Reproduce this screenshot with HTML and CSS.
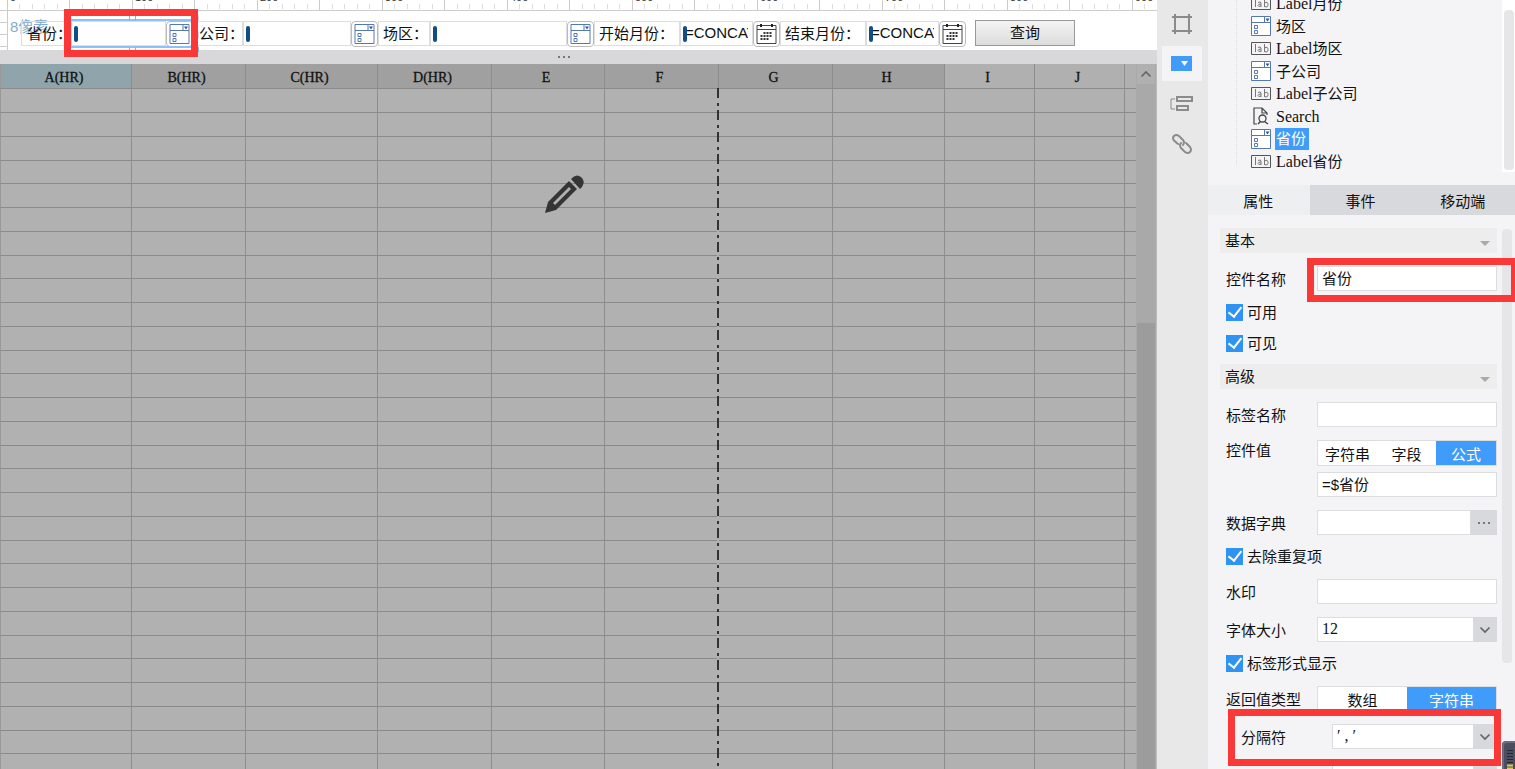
FILE: index.html
```html
<!DOCTYPE html>
<html lang="zh-CN">
<head>
<meta charset="utf-8">
<title>控件设置</title>
<link rel="stylesheet" href="styles.css">
</head>
<body>
<svg class="defs" aria-hidden="true">
  <symbol id="combo" viewBox="0 0 20 20"><path d="M.5.5h19v19H.5zM.5 6.500h19M13.500.5v6" fill="#fff" stroke="#5478b0"/><path d="M14.500 2.500h4l-2 3z" fill="#34558d"/><path d="M3.500 9.500h3v3h-3zM3.500 14.500h3v3h-3z" fill="none" stroke="#5478b0"/></symbol>
  <symbol id="cal" viewBox="0 0 20 20"><path d="M.5 1.500h19v18H.5zM.5 5.500h19" fill="#fff" stroke="#444"/><path d="M4.500 0v3M15.500 0v3" stroke="#222" stroke-width="2"/><path d="M7 8h2v2H7zM10 8h2v2h-2zM13 8h2v2h-2zM4 11h2v2H4zM7 11h2v2H7zM10 11h2v2h-2zM13 11h2v2h-2zM4 14h2v2H4zM7 14h2v2H7zM10 14h2v2h-2z" fill="#333"/></symbol>
  <symbol id="lab" viewBox="0 0 20 13"><path d="M.5.5h19v12H.5z" fill="#f4f4f6" stroke="#555"/><path d="M4.500 2v8M7 5.500q3-1.500 3 .8V10M10 7q-3 0-3 1.500t3 .7M13.500 2v8M13.500 6q3.500-2 3.500 1.500t-3.500 2" fill="none" stroke="#777"/></symbol>
  <symbol id="find" viewBox="0 0 16 18"><path d="M4 17H1V1h8l5 5v2M9 1v5h5" fill="none" stroke="#444" stroke-width="1.200"/><circle cx="9.500" cy="11.500" r="3.500" fill="none" stroke="#444" stroke-width="1.300"/><path d="M7.500 14.500L5 17M11.500 14.500L15 17" stroke="#444" stroke-width="1.500"/></symbol>
  <symbol id="down" viewBox="0 0 12 8"><path d="M1.500 1.500L6 6l4.500-4.500" fill="none" stroke="#666" stroke-width="1.700"/></symbol>
</svg>

<main class="designer">
  <div class="ruler">
    <svg class="ticks" aria-hidden="true">
      <defs><pattern id="tk" width="125" height="10" patternUnits="userSpaceOnUse"><path d="M.5 0v10M62.500 0v10" stroke="#ccc"/><path d="M12.500 4v5M25.500 4v5M37.500 4v5M50.500 4v5M75.500 4v5M87.500 4v5M100.500 4v5M112.500 4v5" stroke="#ddd"/></pattern></defs>
      <rect width="100%" height="10" fill="url(#tk)"/>
    </svg>
    <div class="marks"><span>0</span><span>100</span><span>200</span><span>300</span><span>400</span><span>500</span><span>600</span><span>700</span><span>800</span><span>900</span></div>
  </div>

  <div class="params">
    <div class="vruler"></div>
    <span class="offset">8像素</span>
    <label class="plabel first" for="p1">省份：</label>
    <div class="field selected">
      <input id="p1" class="pinput w-s"><button class="pbtn" aria-label="选择省份"><svg><use href="#combo"/></svg></button>
      <svg class="handles" width="130" height="38" aria-hidden="true"><path d="M58.500 6V.5h6V6M122 .5h5V6h-5M122 16.500h5v7h-5M58.500 32v5h6v-5M127.500 37v-5H122" fill="none" stroke="#8db4d6"/></svg>
      <i class="mark mark-top"></i>
    </div>
    <label class="plabel sub" for="p2">公司：</label>
    <div class="field"><input id="p2" class="pinput w-m"><button class="pbtn" aria-label="选择子公司"><svg><use href="#combo"/></svg></button></div>
    <label class="plabel area" for="p3">场区：</label>
    <div class="field"><input id="p3" class="pinput w-l"><button class="pbtn" aria-label="选择场区"><svg><use href="#combo"/></svg></button></div>
    <label class="plabel month" for="p4">开始月份：</label>
    <div class="field"><input id="p4" class="pinput w-d" value="=CONCATENATE"><button class="pbtn" aria-label="开始日期"><svg><use href="#cal"/></svg></button></div>
    <label class="plabel month" for="p5">结束月份：</label>
    <div class="field"><input id="p5" class="pinput w-d" value="=CONCATENATE"><button class="pbtn" aria-label="结束日期"><svg><use href="#cal"/></svg></button></div>
    <button class="query">查询</button>
  </div>

  <div class="splitter"><i></i><i></i><i></i></div>

  <div class="sheet">
    <div class="cells">
      <table class="grid">
        <colgroup><col class="c132"><col class="c114"><col class="c132"><col class="c114"><col class="c113"><col class="c114"><col class="c114"><col class="c112"><col class="c90"><col class="c90"><col></colgroup>
        <thead><tr><th class="on">A(HR)</th><th>B(HR)</th><th>C(HR)</th><th>D(HR)</th><th>E</th><th>F</th><th>G</th><th>H</th><th class="off">I</th><th class="off">J</th><th class="off"></th></tr></thead>
        <tbody id="rows"></tbody>
      </table>
      <div class="pagebreak"></div>
      <svg class="pencil" viewBox="0 0 40 40" aria-hidden="true"><path fill="#353535" fill-rule="evenodd" d="M1 39L4 28 25 7l8 8-21 21zM9 29l2 2 16-16-2-2z"/><path fill="#353535" d="M27 5q5-6 10-2t1 10l-2 2z"/></svg>
    </div>
    <div class="vscroll"><div class="up"><svg width="12" height="8"><use href="#down"/></svg></div><div class="thumb"></div></div>
  </div>
</main>

<nav class="rail">
  <button aria-label="单元格"><svg width="22" height="22" fill="none" stroke="#8b8b8b" stroke-width="2"><path d="M4 1v20M18 1v20M1 4h20M1 18h20"/></svg></button>
  <button class="active" aria-label="控件"><svg width="22" height="16"><path fill="#409cfb" d="M0 0h21v15H0z"/><path fill="#fff" d="M10 5h7l-3.500 5z"/></svg></button>
  <button aria-label="条件"><svg width="24" height="18" fill="none" stroke="#8b8b8b" stroke-width="2"><path d="M7 2h15v4H7zM7 11h11v4H7z"/><path d="M5 4H1v10h4" stroke-width="1"/></svg></button>
  <button aria-label="超链接"><svg width="22" height="22" viewBox="0 0 22 22" fill="none" stroke="#8b8b8b" stroke-width="2" stroke-linecap="round"><path d="M7 11L3 7.500Q1 5 3 3t5 0l4 4q2 2 0 5M15 10l4 4q2 3 0 5t-5 0l-4-4q-2-3 0-5"/></svg></button>
</nav>

<aside class="panel">
  <div class="tree">
    <ul>
      <li><svg class="tl"><use href="#lab"/></svg><span><b>Label</b>月份</span></li>
      <li><svg class="tc"><use href="#combo"/></svg><span>场区</span></li>
      <li><svg class="tl"><use href="#lab"/></svg><span><b>Label</b>场区</span></li>
      <li><svg class="tc"><use href="#combo"/></svg><span>子公司</span></li>
      <li><svg class="tl"><use href="#lab"/></svg><span><b>Label</b>子公司</span></li>
      <li><svg class="tf"><use href="#find"/></svg><span><b>Search</b></span></li>
      <li><svg class="tc"><use href="#combo"/></svg><span class="sel">省份</span></li>
      <li><svg class="tl"><use href="#lab"/></svg><span><b>Label</b>省份</span></li>
    </ul>
    <div class="tscroll"><i></i></div>
  </div>
  <div class="tabs" role="tablist"><button role="tab" aria-selected="true" class="cur">属性</button><button role="tab">事件</button><button role="tab">移动端</button></div>
  <div class="body">
    <form class="props">
      <h2>基本</h2>
      <div class="row"><label for="f1">控件名称</label><div class="ctl"><input id="f1" class="box" value="省份"><i class="mark mark-name"></i></div></div>
      <label class="check"><input type="checkbox" checked><span>可用</span></label>
      <label class="check"><input type="checkbox" checked><span>可见</span></label>
      <h2>高级</h2>
      <div class="row"><label for="f2">标签名称</label><input id="f2" class="box"></div>
      <div class="row high"><label for="f3">控件值</label><div class="seg three"><button type="button">字符串</button><button type="button">字段</button><button type="button" class="pick">公式</button></div></div>
      <div class="row tight"><span></span><input id="f3" class="box" value="=$省份"></div>
      <div class="row"><label for="f4">数据字典</label><div class="combo"><input id="f4" class="box"><button type="button" class="dots" aria-label="更多"><i></i><i></i><i></i></button></div></div>
      <label class="check"><input type="checkbox" checked><span>去除重复项</span></label>
      <div class="row"><label for="f5">水印</label><input id="f5" class="box"></div>
      <div class="row"><label for="f6">字体大小</label><div class="combo"><select id="f6" class="box"><option>12</option></select><span class="arrow"><svg width="12" height="8"><use href="#down"/></svg></span></div></div>
      <label class="check"><input type="checkbox" checked><span>标签形式显示</span></label>
      <div class="row"><span class="name">返回值类型</span><div class="seg two"><button type="button">数组</button><button type="button" class="pick">字符串</button></div></div>
      <div class="row inner"><label for="f7">分隔符</label><div class="combo"><select id="f7" class="box"><option>′ , ′</option></select><span class="arrow"><svg width="12" height="8"><use href="#down"/></svg></span></div><i class="mark mark-sep"></i></div>
      <div class="row inner"><span></span><div class="combo"><input class="box" aria-label="起始符"><span class="arrow"></span></div></div>
    </form>
    <div class="pscroll"></div>
  </div>
  <svg class="widget" width="14" height="28" aria-hidden="true"><path d="M0 28V4q0-4 4-4h10v28z" fill="#4b4e5e"/><path d="M1 28V5q0-4 4-4h9" fill="none" stroke="#6a6d7c" stroke-width="2"/><path d="M5 9.500h6M5 12.500h6M5 15.500h6M5 18.500h6M5 21.500h6" stroke="#252831"/><path d="M5 24.500h6M5 27.500h6" stroke="#e8c94b" stroke-width="2"/></svg>
</aside>
<script src="grid.js"></script>
</body>
</html>
```
FILE: styles.css
```css
* { box-sizing: border-box; }
body { margin: 0; height: 100vh; display: flex; overflow: hidden; font: 15px/20px "Liberation Sans", "Noto Sans CJK SC", sans-serif; color: #111; background: #f4f4f7; }
button, input, select { font: inherit; color: inherit; margin: 0; padding: 0; border: 0; border-radius: 0; }
button { background: none; }
.defs { position: absolute; width: 0; height: 0; }

.designer { flex: 1; min-width: 0; display: flex; flex-direction: column; overflow: hidden; background: #fff; }
.ruler { height: 11px; flex: none; position: relative; overflow: hidden; padding-left: 7px; border-bottom: 1px solid #ccc; }
.ticks { display: block; width: 100%; height: 10px; }
.marks { position: absolute; top: -8px; left: 10px; display: flex; font-size: 11px; line-height: 10px; color: #333; }
.marks span { flex: none; width: 125px; }

.params { height: 39px; flex: none; display: flex; align-items: center; position: relative; padding-top: 5px; }
.vruler { width: 8px; height: 39px; margin: -5px 13px 0 0; flex: none; border-right: 1px solid #ccc; background: repeating-linear-gradient(#fff 0 11px, #ccc 11px 12px); }
.offset { position: absolute; left: 10px; top: 6px; font-size: 15px; color: #82acd0; }
.plabel { position: relative; flex: none; height: 25px; line-height: 23px; border: 1px solid #ddd; padding-left: 4px; overflow: hidden; white-space: nowrap; }
.first { width: 50px; padding-left: 5px; }
.sub { width: 50px; padding-left: 5px; }
.area { width: 52px; }
.month { width: 86px; }
.field { position: relative; flex: none; display: flex; height: 25px; }
.field::before { content: ""; position: absolute; left: 3px; top: 5px; width: 4px; height: 16px; border-radius: 2px; background: #124e83; }
.pinput { height: 25px; border: 1px solid #ddd; padding: 0 4px 2px 4px; background: #fff; }
.w-s { width: 95px; }
.w-m { width: 108px; }
.w-l { width: 137px; }
.w-d { width: 73px; }
.pbtn { width: 27px; height: 26px; padding: 2px; border: 1px solid #bbb; border-radius: 4px; background: #fff; }
.pbtn svg { display: block; width: 21px; height: 20px; }
.selected { outline: 2px solid #8fc0f8; }
.handles { position: absolute; left: 0; top: -6px; }
.mark { position: absolute; border: 7px solid #fb3838; pointer-events: none; z-index: 2; }
.mark-top { inset: -12px -5px -11px -7px; }
.query { width: 100px; height: 26px; margin-left: 9px; border: 1px solid #999; background: linear-gradient(#f4f4f4, #dcdcdc); }

.splitter { height: 14px; flex: none; display: flex; justify-content: center; align-items: center; gap: 3px; padding-right: 30px; background: #d8d8db; }
.splitter i, .dots i { width: 2px; height: 2px; background: #777; }

.sheet { flex: 1; min-height: 0; display: flex; background: #b1b1b1; }
.cells { flex: 1; min-width: 0; position: relative; overflow: hidden; }
.grid { width: 100%; table-layout: fixed; border-collapse: separate; border-spacing: 0; }
.grid th, .grid td { padding: 0; border-right: 1px solid #8d8d8d; border-bottom: 1px solid #8a8a8a; }
.grid th:last-child, .grid td:last-child { border-right: 0; }
.grid th:first-child, .grid td:first-child { border-left: 1px solid #999; }
.grid th { height: 25px; padding: 3px 4px 0 0; background: #a0a0a0; font: 14px/18px "Liberation Serif", serif; -webkit-text-stroke: 0.3px #111; }
.grid .on { background: #8fa5ab; }
.grid .off { background: #b0b0b0; }
.grid td { height: 24px; }
.grid tr:nth-child(4n) td { height: 23px; }
.c132 { width: 132px; }
.c114 { width: 114px; }
.c113 { width: 113px; }
.c112 { width: 112px; }
.c90 { width: 90px; }
.pagebreak { position: absolute; top: 24px; bottom: 0; left: 717px; width: 2px; background: repeating-linear-gradient(#333 0 10px, #b1b1b1 10px 15px, #333 15px 18px, #b1b1b1 18px 22px); }
.pencil { position: absolute; left: 544px; top: 110px; width: 40px; height: 40px; }
.vscroll { width: 21px; display: flex; flex-direction: column; padding: 0 1px; background: #a9a9a9; border-right: 1px solid #bbb; }
.up { height: 20px; display: grid; place-items: center; background: #b0b0b0; }
.up svg { transform: rotate(180deg); }
.thumb { flex: 1; margin-top: 239px; background: #9c9c9c; }

.rail { width: 51px; flex: none; display: flex; flex-direction: column; gap: 5px; padding: 6px 6px 0 5px; background: #e8e8e8; }
.rail button { height: 35px; display: grid; place-items: center; }
.rail .active { background: #f4f4f7; }

.panel { width: 307px; flex: none; position: relative; overflow: hidden; display: flex; flex-direction: column; }
.tree { height: 185px; flex: none; display: flex; justify-content: space-between; overflow: hidden; }
.tree ul { list-style: none; margin: -7px 0 0 28px; padding: 0; height: 172px; border-left: 1px dotted #ddd; }
.tree li { display: flex; align-items: center; height: 22px; padding-left: 14px; }
.tree li:nth-child(even) { height: 23px; }
.tree li svg { flex: none; margin-top: -1px; }
.tree li span { padding: 1px 3px 1px 1px; line-height: 20px; }
.tree b { font: 16px/20px "Liberation Serif", serif; }
.tree .sel { background: #409cfb; color: #fff; }
.tl { width: 20px; height: 13px; margin-right: 4px; }
.tc { width: 20px; height: 20px; margin-right: 4px; }
.tf { width: 16px; height: 18px; margin: 0 6px 0 2px; }
.tscroll { width: 13px; height: 172px; padding: 10px 1px 2px 2px; background: #fff; }
.tscroll i { display: block; height: 160px; border-radius: 4px; background: #e6e6e8; }

.tabs { height: 30px; flex: none; display: flex; background: #d8d9dc; }
.tabs button { flex: 1; padding: 3px 2px 0 0; }
.tabs .cur { background: #eeeff1; }

.body { display: flex; padding-top: 13px; }
.props { flex: 1; padding-left: 12px; }
.props h2 { margin: 13px 0 0; height: 25px; padding: 0 7px 0 5px; display: flex; align-items: center; justify-content: space-between; font-size: 15px; font-weight: 400; line-height: 22px; background: #ededed; }
.props h2:first-child { margin-top: 0; }
.props h2::after { content: ""; margin-top: 5px; border: 5px solid transparent; border-top-color: #aaa; border-bottom: 0; }
.row { position: relative; display: grid; grid-template-columns: 91px 1fr; align-items: center; height: 25px; margin: 13px 0 0 6px; }
.row > label, .name, .check span { padding-top: 2px; }
.row.high > label { padding: 0 0 4px; }
.inner { margin-left: 21px; }
.tight { margin-top: 7px; }
.check + .row { margin-top: 15px; }
.check { display: flex; align-items: center; gap: 4px; height: 16px; margin: 13px 0 0 6px; }
.check + .check { margin-top: 15px; }
.check input { appearance: none; width: 17px; height: 17px; background: #2f93f4; display: grid; place-items: center; }
.check input:checked::before { content: ""; width: 6px; height: 11px; border: solid #fff; border-width: 0 2px 2px 0; transform: rotate(38deg); margin-top: -3px; }
.ctl { position: relative; display: flex; }
.box { appearance: none; width: 100%; min-width: 0; height: 25px; border: 1px solid #dcdddf; background: #fff; padding: 0 4px 2px; }
select.box { font-family: "Liberation Serif", serif; font-size: 16px; }
.combo { display: flex; min-width: 0; position: relative; }
.arrow { position: absolute; right: 0; top: 0; width: 24px; height: 25px; display: grid; place-items: center; background: #d8d9dc; pointer-events: none; }
.dots { width: 26px; flex: none; display: flex; align-items: center; justify-content: center; gap: 3px; background: #d8d9dc; }
.seg { display: grid; height: 26px; border: 1px solid #dcdddf; background: #fff; }
.seg button { padding-top: 3px; }
.three { grid-template-columns: 59px 59px 1fr; }
.two { grid-template-columns: 1fr 1fr; }
.seg .pick { background: #409cfb; color: #fff; }
.mark-name { inset: -8px -21px -11px -10px; }
.mark-sep { inset: -15px -4px -17px -13px; }
.pscroll { width: 10px; height: 434px; margin: 1px 3px 0 5px; border-radius: 4px; background: #e6e6e8; }
.widget { position: absolute; right: -1px; bottom: 0; }
```
FILE: grid.js
```js
const body = document.getElementById('rows');
for (let r = 0; r < 29; r++) {
  const row = body.insertRow();
  for (let c = 0; c < 11; c++) row.insertCell();
}
```
